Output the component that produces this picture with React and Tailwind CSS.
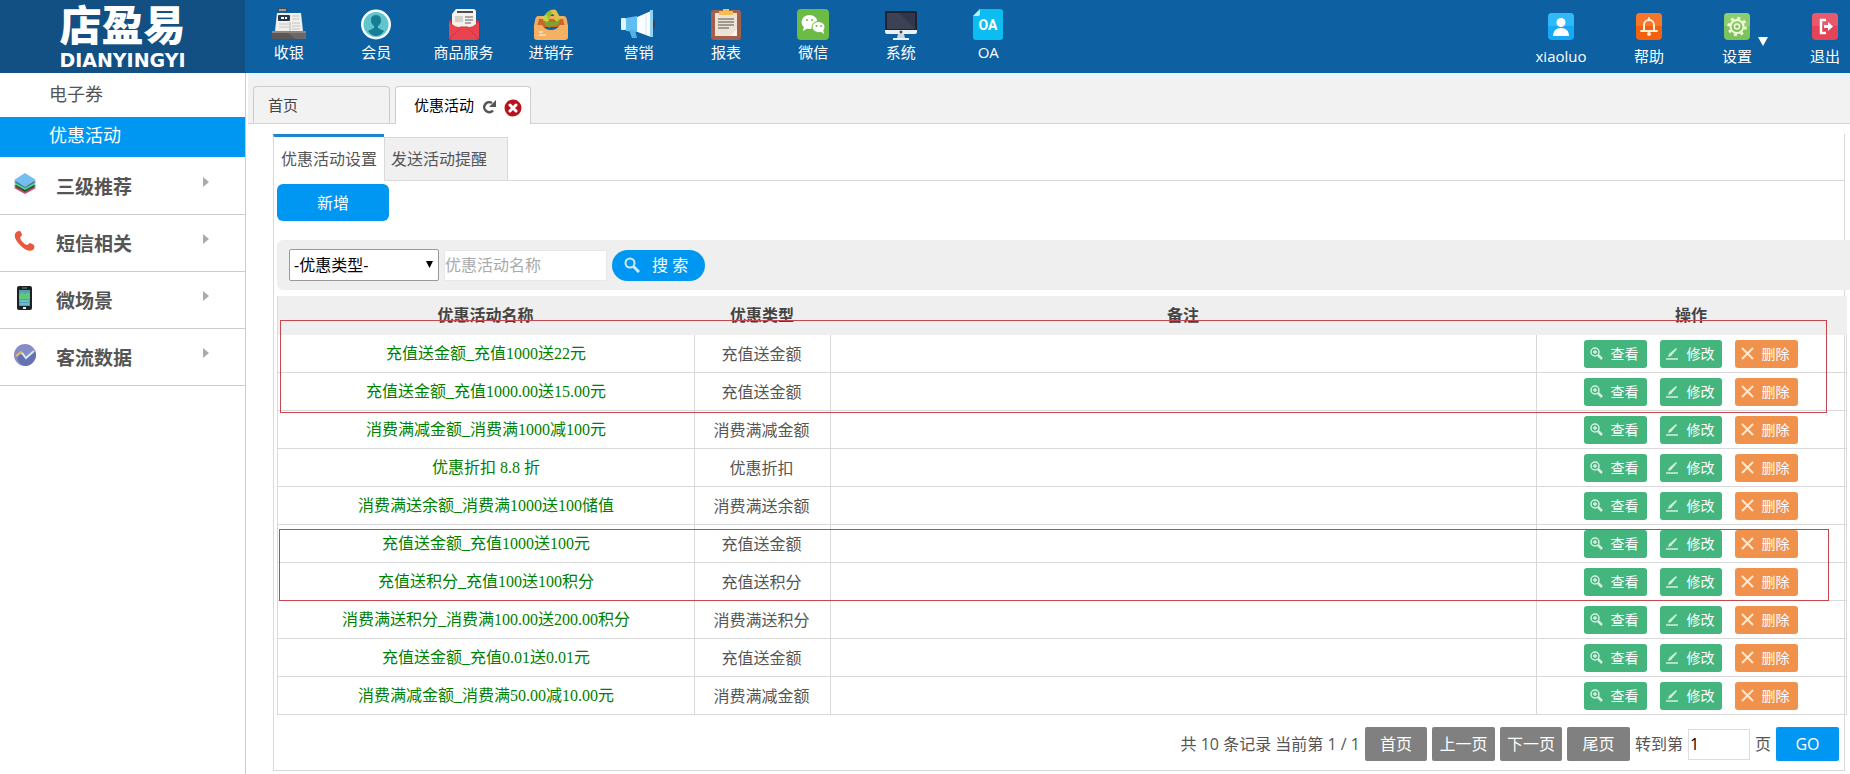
import React, { useState } from 'react';

const navItems = [
    { label: '收银', icon: <CashierIcon /> },
    { label: '会员', icon: <MemberIcon /> },
    { label: '商品服务', icon: <GoodsIcon /> },
    { label: '进销存', icon: <StockIcon /> },
    { label: '营销', icon: <MarketingIcon /> },
    { label: '报表', icon: <ReportIcon /> },
    { label: '微信', icon: <WechatIcon /> },
    { label: '系统', icon: <SystemIcon /> },
    { label: 'OA', icon: <OaIcon /> },
];

const userItems = [
    { label: 'xiaoluo', icon: <UserIcon /> },
    { label: '帮助', icon: <BellIcon /> },
    { label: '设置', icon: <GearIcon />, arrow: true },
    { label: '退出', icon: <ExitIcon /> },
];

const sideGroups = [
    { label: '三级推荐', icon: <LayersIcon /> },
    { label: '短信相关', icon: <PhoneIcon /> },
    { label: '微场景', icon: <MobileIcon /> },
    { label: '客流数据', icon: <TrafficIcon /> },
];

const activities = [
    { name: '充值送金额_充值1000送22元', type: '充值送金额' },
    { name: '充值送金额_充值1000.00送15.00元', type: '充值送金额' },
    { name: '消费满减金额_消费满1000减100元', type: '消费满减金额' },
    { name: '优惠折扣 8.8 折', type: '优惠折扣' },
    { name: '消费满送余额_消费满1000送100储值', type: '消费满送余额' },
    { name: '充值送金额_充值1000送100元', type: '充值送金额' },
    { name: '充值送积分_充值100送100积分', type: '充值送积分' },
    { name: '消费满送积分_消费满100.00送200.00积分', type: '消费满送积分' },
    { name: '充值送金额_充值0.01送0.01元', type: '充值送金额' },
    { name: '消费满减金额_消费满50.00减10.00元', type: '消费满减金额' },
];

/* ---------- top navigation icons ---------- */

function CashierIcon() {
    return (
        <svg width="34" height="32" viewBox="0 0 34 32">
            <rect x="5" y="0" width="11" height="4" rx="1" fill="#3f4c5c" />
            <rect x="7" y="1" width="7" height="2" fill="#8fa3b3" />
            <rect x="9" y="4" width="2" height="2" fill="#55606e" />
            <path d="M5 5h24l2 18H3z" fill="#f1efec" />
            <rect x="6" y="7" width="12" height="6" rx="1" fill="#27384d" />
            <path d="M9 10h3M13 10h2" stroke="#fff" strokeWidth="2" />
            <path d="M20 8h7M20 11h7M7 16h10M7 19h10M20 15h8M20 18h8M20 21h8" stroke="#c4c4c4" strokeWidth="1" />
            <path d="M18 14v9" stroke="#b5b5b5" />
            <rect x="0" y="23" width="34" height="8" rx="1" fill="#5b5656" />
            <rect x="0" y="23" width="34" height="2" fill="#8b8685" />
            <path d="M16 25h18v6H24z" fill="#6d6867" />
        </svg>
    );
}

function MemberIcon() {
    return (
        <svg width="30" height="31" viewBox="0 0 30 31">
            <circle cx="15" cy="15.500" r="15" fill="#f4fdfd" />
            <circle cx="15" cy="15.500" r="12.500" fill="#62c5cd" />
            <path d="M15 6c-4 0-5 3-5 5 0 3 1 4 3 6v2l-6 3c2 3 5 5 8 5s6-2 8-5l-6-3v-2c2-2 3-3 3-6 0-2-1-5-5-5z" fill="#167d94" />
        </svg>
    );
}

function GoodsIcon() {
    return (
        <svg width="30" height="31" viewBox="0 0 30 31">
            <path d="M0 12l4-3h22l4 3v6H0z" fill="#c22f3c" />
            <path d="M3 19V5l4-5h17q3 0 3 3v16z" fill="#f5f1ec" />
            <path d="M8 3h16" stroke="#4c4c52" strokeWidth="2" />
            <path d="M6 7h8v6H6z" fill="#d4d0cc" />
            <path d="M16 8h8M16 11h8M16 14h6" stroke="#5f5f66" />
            <path d="M0 12c4 5 8 6 11 6h8c3 0 7-1 11-6v16q0 3-3 3H3q-3 0-3-3z" fill="#e8434f" />
            <path d="M11 18h8M1 29l10-9M29 29l-10-9" stroke="#cf3543" fill="none" />
        </svg>
    );
}

function StockIcon() {
    return (
        <svg width="34" height="31" viewBox="0 0 34 31">
            <path d="M4 7h26q2 0 3 4l1 6H0l1-6q1-4 3-4z" fill="#f2ab62" />
            <path d="M5 10h24l2 8H3z" fill="#c9662b" />
            <path d="M9 12c0-5 3-9 8-11l4-1-2 5c-3 1-4 4-4 7z" fill="#9dbb2e" />
            <path d="M16 1l6 0 4 7h3l-6 5-5-5h3z" fill="#dfc146" />
            <path d="M11 13h12l2-3 1 3q-2 4-6 4h-4v2l-6-4z" fill="#7aa62c" />
            <path d="M7 8l6-2 2 6-3 1z" fill="#c6d34b" />
            <path d="M0 17q0-1 1-1h7q3 5 9 5t9-5h7q1 0 1 1v11q0 3-3 3H3q-3 0-3-3z" fill="#f4b063" />
            <path d="M5 26h7M5 23h4" stroke="#fbd9a6" strokeWidth="2" />
        </svg>
    );
}

function MarketingIcon() {
    return (
        <svg width="34" height="31" viewBox="0 0 34 31">
            <rect x="30" y="11" width="4" height="9" rx="2" fill="#3b4654" />
            <path d="M14 9L30 2v26l-16-6z" fill="#fafdff" />
            <path d="M5 9l11-2v16l-11-1z" fill="#60bff0" />
            <path d="M8 21h6l2 8h-5z" fill="#54b1e4" />
            <rect x="0" y="9" width="5" height="12" rx="1" fill="#dff4fd" />
            <rect x="29" y="1" width="3" height="27" fill="#8fd2f2" />
            <path d="M25 5v21" stroke="#d9e6ee" />
        </svg>
    );
}

function ReportIcon() {
    return (
        <svg width="30" height="31" viewBox="0 0 30 31">
            <rect x="0" y="1" width="30" height="30" rx="3" fill="#a4604d" />
            <path d="M4 4h22v17l-6 6H4z" fill="#ece3d5" />
            <path d="M26 20v7h-7z" fill="#fbf7f0" />
            <path d="M12 0h6v2h4v4H8V2h4z" fill="#f3bd55" />
            <path d="M7 10h16M7 13h16M7 16h16M7 19h11" stroke="#55504e" />
        </svg>
    );
}

function WechatIcon() {
    return (
        <svg width="32" height="31" viewBox="0 0 32 31">
            <rect width="32" height="31" rx="4" fill="#6cbb45" />
            <ellipse cx="12.500" cy="13" rx="8" ry="7" fill="#fff" />
            <path d="M7 17l-1 5 5-3z" fill="#fff" />
            <ellipse cx="21.500" cy="18" rx="6.500" ry="5.500" fill="#fff" stroke="#6cbb45" />
            <path d="M23 22l4 3-1-5z" fill="#fff" />
            <circle cx="10" cy="11" r="1" fill="#6cbb45" />
            <circle cx="15" cy="11" r="1" fill="#6cbb45" />
            <circle cx="19.500" cy="17" r="1" fill="#6cbb45" />
            <circle cx="24" cy="17" r="1" fill="#6cbb45" />
        </svg>
    );
}

function SystemIcon() {
    return (
        <svg width="32" height="31" viewBox="0 0 32 31">
            <rect x="0" y="2" width="32" height="21" rx="1" fill="#1d2130" />
            <rect x="2" y="4" width="28" height="16" fill="#3d4154" />
            <path d="M14 4h16v16z" fill="#32364a" />
            <path d="M0 21h32v2q0 2-2 2H2q-2 0-2-2z" fill="#eef0f2" />
            <circle cx="16" cy="23" r="1.500" fill="#4a4a4a" />
            <path d="M13 25h6l1 4h-8z" fill="#cfd6dc" />
            <path d="M8 29h16v2H8z" fill="#eaf0f4" />
        </svg>
    );
}

function OaIcon() {
    return (
        <svg width="30" height="31" viewBox="0 0 30 31">
            <path d="M7 0h20q3 0 3 3v25q0 3-3 3H3q-3 0-3-3V7z" fill="#0bbdf0" />
            <path d="M7 0v5q0 2-2 2H0z" fill="#b9effc" />
            <text x="15" y="21" textAnchor="middle" fontSize="14" fontWeight="700" fontFamily="Roboto, sans-serif" fill="#fff">OA</text>
        </svg>
    );
}

/* ---------- user area icons ---------- */

function UserIcon() {
    return (
        <svg width="26" height="27" viewBox="0 0 26 27">
            <rect width="26" height="27" rx="4" fill="#16a9f5" />
            <path d="M4 0h18q4 0 4 4v9H0V4q0-4 4-4z" fill="#2fb8fa" />
            <circle cx="13" cy="9.500" r="4.500" fill="#fff" />
            <path d="M5 23c0-5 3-8 8-8s8 3 8 8z" fill="#fff" />
        </svg>
    );
}

function BellIcon() {
    return (
        <svg width="26" height="27" viewBox="0 0 26 27">
            <rect width="26" height="27" rx="4" fill="#f4600c" />
            <path d="M4 0h18q4 0 4 4v9H0V4q0-4 4-4z" fill="#f7762c" />
            <path d="M5 18h16M8 18v-6a5 5 0 0 1 10 0v6M13 5v2" fill="none" stroke="#fdf0d8" strokeWidth="2" strokeLinecap="round" />
            <circle cx="13" cy="21" r="2" fill="#fdf0d8" />
        </svg>
    );
}

function GearIcon() {
    return (
        <svg width="26" height="27" viewBox="0 0 26 27">
            <rect width="26" height="27" rx="4" fill="#7cc35a" />
            <path d="M4 0h18q4 0 4 4v9H0V4q0-4 4-4z" fill="#8ccd6d" />
            <g fill="none" stroke="#f3fbdc">
                <circle cx="13" cy="13.500" r="6.500" strokeWidth="2" />
                <circle cx="13" cy="13.500" r="2.500" strokeWidth="1.500" />
                <circle cx="13" cy="13.500" r="8.500" strokeWidth="2.500" strokeDasharray="3 3.675" />
            </g>
        </svg>
    );
}

function ExitIcon() {
    return (
        <svg width="26" height="27" viewBox="0 0 26 27">
            <rect width="26" height="27" rx="4" fill="#e34458" />
            <path d="M4 0h18q4 0 4 4v9H0V4q0-4 4-4z" fill="#e9596b" />
            <path d="M14 7H9v13h5" fill="none" stroke="#fff" strokeWidth="2.500" />
            <path d="M12 12h4V9l5 4.500-5 4.500v-3h-4z" fill="#fff" />
        </svg>
    );
}

/* ---------- sidebar icons ---------- */

function LayersIcon() {
    return (
        <svg width="22" height="22" viewBox="0 0 22 22">
            <path d="M0 15l11-6 11 6-11 6z" fill="#c4506a" />
            <path d="M0 13l11-6 11 6-11 6z" fill="#2c4f41" />
            <path d="M0 11l11-6 11 6-11 6z" fill="#62cf7b" />
            <path d="M0 9l11-6 11 6-11 6z" fill="#3b7c9c" />
            <path d="M0 7l11-7 11 7-11 7z" fill="#76bdf0" />
        </svg>
    );
}

function PhoneIcon() {
    return (
        <svg width="22" height="22" viewBox="0 0 22 22">
            <path d="M1 4c1-3 5-4 6-2l1 3c0 1-2 2-2 3 1 3 4 6 7 7 1 0 2-2 3-2l4 2c1 1 0 4-1 5-3 2-8 0-12-4S0 8 1 4z" fill="#e8573f" />
        </svg>
    );
}

function MobileIcon() {
    return (
        <svg width="22" height="24" viewBox="0 0 22 24">
            <rect x="3" y="0" width="15" height="24" rx="2" fill="#1d2126" />
            <rect x="5" y="4" width="11" height="16" fill="#4fa3ae" />
            <path d="M5 9l3-3 3 2 3-2 2 2v5H5z" fill="#5fc77c" />
            <path d="M6 15h9M6 18h9" stroke="#8fd4e8" />
            <rect x="9" y="21" width="3" height="2" fill="#eee" />
            <path d="M8 2h5" stroke="#888" />
        </svg>
    );
}

function TrafficIcon() {
    return (
        <svg width="22" height="22" viewBox="0 0 22 22">
            <circle cx="11" cy="11" r="11" fill="#868dc6" />
            <path d="M3 14l5-5 4 5 9-7q2 4 0 8-3 6-9 7-6 0-9-8z" fill="#6571b1" />
            <path d="M2 12l5-4 2 2" stroke="#f0b65c" strokeWidth="2" fill="none" />
            <path d="M8 9l4 5 8-7" stroke="#d3ecf5" strokeWidth="2" fill="none" />
        </svg>
    );
}

/* ---------- small icons ---------- */

function RefreshIcon() {
    return (
        <svg width="15" height="14" viewBox="0 0 15 14">
            <path d="M11 10.500A5 5 0 1 1 10 3" fill="none" stroke="#555" strokeWidth="2.500" />
            <path d="M14 0v7H7z" fill="#555" />
        </svg>
    );
}

function CloseIcon() {
    return (
        <svg width="18" height="18" viewBox="0 0 18 18">
            <circle cx="9" cy="9" r="8.500" fill="#b8121f" />
            <path d="M6 6l6 6M12 6l-6 6" stroke="#fff" strokeWidth="3" strokeLinecap="round" />
        </svg>
    );
}

function SearchIcon() {
    return (
        <svg width="16" height="16" viewBox="0 0 16 16">
            <circle cx="6" cy="6" r="4.500" fill="none" stroke="#cfeafd" strokeWidth="2" />
            <path d="M9.500 9.500L15 15" stroke="#cfeafd" strokeWidth="3" />
        </svg>
    );
}

function ViewIcon() {
    return (
        <svg width="13" height="13" viewBox="0 0 13 13">
            <circle cx="5" cy="5" r="4" fill="none" stroke="#d5f0e1" strokeWidth="1.500" />
            <path d="M8 8l4 4" stroke="#d5f0e1" strokeWidth="2.500" />
            <path d="M3 5h4M5 3v4" stroke="#d5f0e1" strokeWidth="1.500" />
        </svg>
    );
}

function EditIcon() {
    return (
        <svg width="13" height="13" viewBox="0 0 13 13">
            <path d="M0 12h12" stroke="#d5f0e1" strokeWidth="1.500" />
            <path d="M2 10l1-3 7-6 1 1-6 7z" fill="#d5f0e1" />
        </svg>
    );
}

function DeleteIcon() {
    return (
        <svg width="13" height="13" viewBox="0 0 13 13">
            <path d="M1 1l11 11M12 1L1 12" stroke="#fde9d8" strokeWidth="2" />
        </svg>
    );
}

/* ---------- layout ---------- */

function Header() {
    return (
        <header className="flex h-[73px] shrink-0 bg-[#0d60a1] text-[15px] leading-5 text-white">
            <div className="flex w-[245px] shrink-0 flex-col items-center bg-[#125084] pt-1">
                <div className="font-['Liberation_Sans','Noto_Sans_CJK_SC',sans-serif] text-[42px] leading-[46px] font-black">店盈易</div>
                <div className="font-['DejaVu_Sans',sans-serif] text-[19px] leading-5 font-bold">DIANYINGYI</div>
            </div>
            <nav className="flex w-[787px] shrink-0">
                {navItems.map((item) => (
                    <a key={item.label} href="#" className="flex flex-1 flex-col items-center pt-2 whitespace-nowrap">
                        <span className="flex h-8 items-end">{item.icon}</span>
                        <span className="mt-0.5">{item.label}</span>
                    </a>
                ))}
            </nav>
            <div className="flex flex-1 justify-end gap-[38px]">
                {userItems.map((item) => (
                    <a key={item.label} href="#" className="relative flex w-[50px] flex-col items-center pt-[13px] whitespace-nowrap">
                        {item.icon}
                        <span className="mt-1.5">{item.label}</span>
                        {item.arrow && (
                            <svg className="absolute top-[37px] -right-1.5" width="10" height="9" viewBox="0 0 10 9">
                                <path d="M0 0h10L5 9z" fill="#fff" />
                            </svg>
                        )}
                    </a>
                ))}
            </div>
        </header>
    );
}

function Sidebar() {
    return (
        <aside className="w-[246px] shrink-0 border-r border-[#ccc] bg-white text-[#555]">
            <a href="#" className="block h-11 pl-[49px] text-lg leading-[42px]">电子券</a>
            <a href="#" className="mb-px block h-10 bg-[#0097f3] pl-[49px] text-lg leading-9 text-white">优惠活动</a>
            {sideGroups.map((group) => (
                <button key={group.label} className="flex h-[57px] w-full items-center border-b border-[#ccc] pl-3.5 text-left">
                    <span className="w-[42px] pb-1">{group.icon}</span>
                    <span className="flex-1 pt-0.5 text-[19px] font-bold">{group.label}</span>
                    <svg className="mr-9 mb-2" width="6" height="10" viewBox="0 0 6 10">
                        <path d="M0 0l6 5-6 5z" fill="#aaa" />
                    </svg>
                </button>
            ))}
        </aside>
    );
}

function PageTabs() {
    return (
        <div className="ml-0.5 flex h-[51px] items-end gap-[5px] border-t-4 border-b border-t-[#e8f5fa] border-b-[#d4d4d4] bg-[#f2f2f2] pl-[5px] text-[15px]">
            <button className="h-[37px] w-[137px] rounded-t border border-b-0 border-[#ccc] pl-3.5 text-left text-[#444]">首页</button>
            <div className="-mb-px flex h-[38px] w-[136px] items-center rounded-t border border-b-0 border-[#ccc] bg-white pl-[18px] text-black">
                <button>优惠活动</button>
                <button aria-label="刷新" className="ml-2 pt-0.5"><RefreshIcon /></button>
                <button aria-label="关闭" className="ml-[7px] pt-1"><CloseIcon /></button>
            </div>
        </div>
    );
}

function SearchBar() {
    const [keyword, setKeyword] = useState('');

    return (
        <form className="mt-[19px] -mr-1.5 flex h-[50px] items-center rounded-l-md bg-[#efefef] pl-3" onSubmit={(e) => e.preventDefault()}>
            <div className="relative">
                <select aria-label="优惠类型" className="block h-8 w-[150px] appearance-none rounded-xs border border-[#999] bg-white pl-1 text-black">
                    <option>-优惠类型-</option>
                </select>
                <svg className="pointer-events-none absolute top-3 right-1.5" width="7" height="7" viewBox="0 0 7 7">
                    <path d="M0 0h7L3.500 7z" fill="#000" />
                </svg>
            </div>
            <input
                aria-label="优惠活动名称"
                placeholder="优惠活动名称"
                value={keyword}
                onChange={(e) => setKeyword(e.target.value)}
                className="ml-[5px] h-[31px] w-[163px] border border-[#e8e8e8] bg-white placeholder:text-[#aaa]"
            />
            <button className="ml-[5px] flex h-[31px] w-[93px] items-center rounded-full bg-[#0097f3] pl-3 text-white">
                <SearchIcon />
                <span className="ml-3">搜 索</span>
            </button>
        </form>
    );
}

function ActivityTable() {
    return (
        <div className="relative mt-1.5 -mr-[3px]">
            <table className="w-full table-fixed border-separate border-spacing-0 border-l border-[#d9d9d9] text-center text-[#555]">
                <colgroup>
                    <col className="w-[417px]" />
                    <col className="w-[136px]" />
                    <col />
                    <col className="w-[310px]" />
                </colgroup>
                <thead>
                    <tr className="h-[39px] bg-[#efefef] text-[#444]">
                        <th className="pr-0.5 pb-0.5">优惠活动名称</th>
                        <th className="pr-0.5 pb-0.5">优惠类型</th>
                        <th className="pr-0.5 pb-0.5">备注</th>
                        <th className="pr-0.5 pb-0.5">操作</th>
                    </tr>
                </thead>
                <tbody>
                    {activities.map((row) => (
                        <tr key={row.name} className="h-[38px]">
                            <td className="border-r border-b border-[#d9d9d9] font-['Liberation_Serif','Noto_Sans_CJK_SC',serif] text-[#008000]">{row.name}</td>
                            <td className="border-r border-b border-[#d9d9d9] pr-0.5">{row.type}</td>
                            <td className="border-r border-b border-[#d9d9d9]"></td>
                            <td className="border-r border-b border-[#d9d9d9] pr-0.5">
                                <div className="flex justify-center gap-[13px] text-sm text-white">
                                    <button className="flex h-7 w-[63px] items-center gap-2 rounded-[3px] bg-[#44b57c] pl-1.5"><ViewIcon />查看</button>
                                    <button className="flex h-7 w-[62px] items-center gap-2 rounded-[3px] bg-[#44b57c] pl-1.5"><EditIcon />修改</button>
                                    <button className="flex h-7 w-[63px] items-center gap-2 rounded-[3px] bg-[#f0924c] pl-1.5"><DeleteIcon />删除</button>
                                </div>
                            </td>
                        </tr>
                    ))}
                </tbody>
            </table>
            {/* highlighted rows */}
            <div className="pointer-events-none absolute top-6 right-5 left-[3px] h-[93px] border border-[#c8474e]"></div>
            <div className="pointer-events-none absolute top-[233px] right-[18px] left-0.5 h-[72px] border border-[#c8474e]"></div>
        </div>
    );
}

function Pagination() {
    const [page, setPage] = useState('1');

    return (
        <div className="flex h-[55px] items-center justify-end gap-[5px] pt-[3px] pr-[5px] text-[#555]">
            <span>共 10 条记录 当前第 1 / 1</span>
            <button className="h-[34px] w-[62px] rounded-xs bg-[#808080] text-white">首页</button>
            <button className="h-[34px] w-[63px] rounded-xs bg-[#808080] text-white">上一页</button>
            <button className="h-[34px] w-[62px] rounded-xs bg-[#808080] text-white">下一页</button>
            <button className="h-[34px] w-[63px] rounded-xs bg-[#808080] text-white">尾页</button>
            <label htmlFor="page">转到第</label>
            <input
                id="page"
                value={page}
                onChange={(e) => setPage(e.target.value)}
                className="h-[31px] w-[62px] border border-[#ddd] bg-white pl-px text-black"
            />
            <span>页</span>
            <button className="h-[34px] w-[63px] rounded-xs bg-[#0097f3] text-white">GO</button>
        </div>
    );
}

export default function App() {
    return (
        <div className="flex min-h-screen flex-col bg-white font-['Open_Sans','Noto_Sans_CJK_SC',sans-serif] text-base">
            <Header />
            <div className="flex flex-1">
                <Sidebar />
                <main className="min-w-0 flex-1 overflow-hidden">
                    <PageTabs />
                    <section className="mt-2.5 mr-[5px] ml-[27px] border-r border-b border-l border-[#d9d9d9]">
                        <div className="-ml-px flex items-end border-b border-[#d9d9d9]">
                            <button className="-mb-px h-[47px] w-[111px] border-t-3 border-l border-t-[#1c86d1] border-l-[#d9d9d9] bg-white text-[#555]">优惠活动设置</button>
                            <button className="h-[43px] w-[124px] border border-b-0 border-[#d9d9d9] bg-[#f0f0f0] pl-1.5 text-left text-[#555]">发送活动提醒</button>
                        </div>
                        <div className="pt-[3px] pl-[3px]">
                            <button className="block h-[37px] w-28 rounded-md bg-[#0097f3] text-white">新增</button>
                            <SearchBar />
                            <ActivityTable />
                        </div>
                        <Pagination />
                    </section>
                </main>
            </div>
        </div>
    );
}
